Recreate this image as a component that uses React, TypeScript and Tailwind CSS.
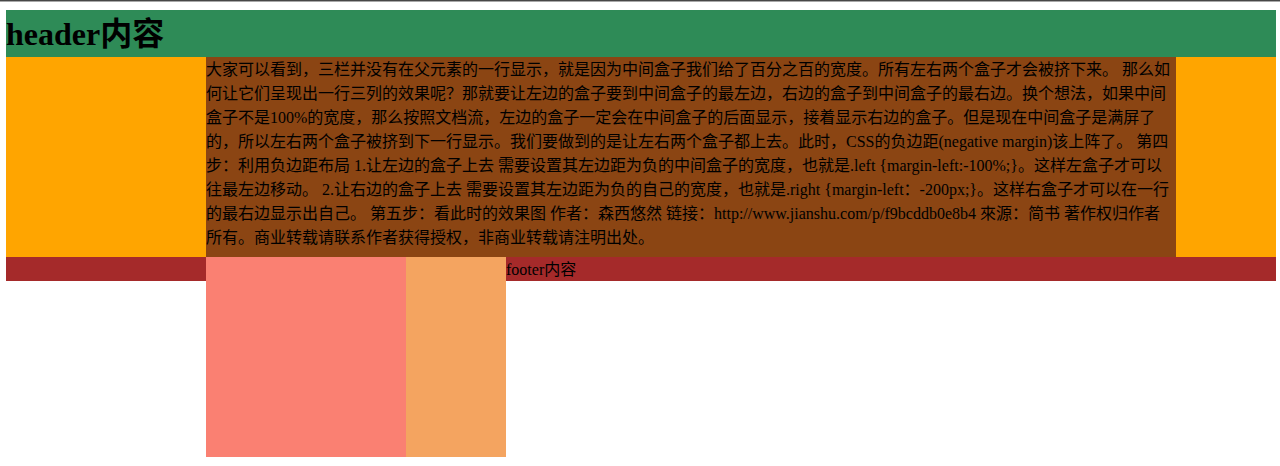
export default function App() {
  const text =
    "大家可以看到，三栏并没有在父元素的一行显示，就是因为中间盒子我们给了百分之百的宽度。所有左右两个盒子才会被挤下来。 那么如何让它们呈现出一行三列的效果呢？那就要让左边的盒子要到中间盒子的最左边，右边的盒子到中间盒子的最右边。换个想法，如果中间盒子不是100%的宽度，那么按照文档流，左边的盒子一定会在中间盒子的后面显示，接着显示右边的盒子。但是现在中间盒子是满屏了的，所以左右两个盒子被挤到下一行显示。我们要做到的是让左右两个盒子都上去。此时，CSS的负边距(negative margin)该上阵了。 第四步：利用负边距布局 1.让左边的盒子上去 需要设置其左边距为负的中间盒子的宽度，也就是.left {margin-left:-100%;}。这样左盒子才可以往最左边移动。 2.让右边的盒子上去 需要设置其左边距为负的自己的宽度，也就是.right {margin-left：-200px;}。这样右盒子才可以在一行的最右边显示出自己。 第五步：看此时的效果图 作者：森西悠然 链接：http://www.jianshu.com/p/f9bcddb0e8b4 來源：简书 著作权归作者所有。商业转载请联系作者获得授权，非商业转载请注明出处。";

  return (
    <div
      className="min-h-[466px] bg-white text-black"
      style={{ fontFamily: '"Liberation Serif", "Noto Sans CJK SC", serif' }}
    >
      <div className="h-[1px] bg-[#474747]" />
      <div className="h-[1px] bg-[#a8a8a8]" />
      <div className="pl-[6px] pr-[4px] pt-[8px]">
        {/* header */}
        <div className="bg-[#2e8b57] h-[47px]">
          <h1 className="text-[32px] font-bold leading-[47px] pt-[1px]">header内容</h1>
        </div>

        {/* three columns */}
        <div className="flex h-[200px]">
          <div className="w-[200px] shrink-0 bg-[#ffa500]" />
          <div className="flex-1 bg-[#8b4513] text-[16px] leading-[24px] pt-[1px]">{text}</div>
          <div className="w-[100px] shrink-0 bg-[#ffa500]" />
        </div>

        {/* footer */}
        <div className="flex h-[24px] items-start bg-[#a52a2a]">
          <div className="w-[200px] shrink-0" />
          <div className="w-[200px] h-[200px] shrink-0 bg-[#fa8072]" />
          <div className="w-[100px] h-[200px] shrink-0 bg-[#f4a460]" />
          <span className="text-[16px] leading-[24px] pt-[1px]">footer内容</span>
        </div>
      </div>
    </div>
  );
}
